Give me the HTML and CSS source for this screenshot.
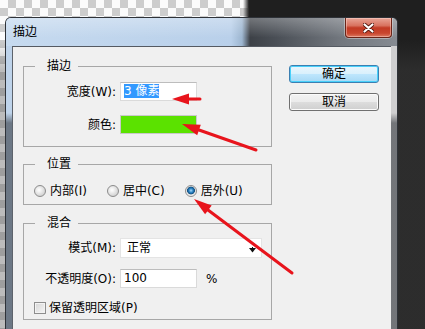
FILE: index.html
```html
<!DOCTYPE html>
<html lang="zh-CN">
<head>
<meta charset="utf-8">
<title>描边</title>
<link rel="stylesheet" href="styles.css">
</head>
<body>
<div class="desk">
  <div class="window">
    <div class="titlebar">
      <span class="title">描边</span>
      <button class="close" aria-label="关闭">
        <svg width="11" height="10" viewBox="0 0 11 10">
          <path d="M1.5 1.5 L9.5 8.5 M9.5 1.5 L1.5 8.5" stroke="#5a1a10" stroke-width="4" stroke-linecap="round"/>
          <path d="M1.5 1.5 L9.5 8.5 M9.5 1.5 L1.5 8.5" stroke="#ffffff" stroke-width="2.2" stroke-linecap="round"/>
        </svg>
      </button>
    </div>
    <div class="client">
      <div class="groups">
        <fieldset class="group g-stroke">
          <legend>描边</legend>
          <div class="form">
            <span class="lbl">宽度(W):</span>
            <div class="field"><span class="hilite">3 像素</span></div>
            <span class="lbl">颜色:</span>
            <div class="swatch"></div>
          </div>
        </fieldset>
        <fieldset class="group g-pos">
          <legend>位置</legend>
          <div class="radios">
            <label class="opt"><span class="radio"></span>内部(I)</label>
            <label class="opt"><span class="radio"></span>居中(C)</label>
            <label class="opt"><span class="radio on"></span>居外(U)</label>
          </div>
        </fieldset>
        <fieldset class="group g-blend">
          <legend>混合</legend>
          <div class="rows">
            <div class="row">
              <span class="lbl">模式(M):</span>
              <div class="select">正常
                <svg class="caret" width="7" height="6" viewBox="0 0 7 6"><path d="M0 1 H7 L3.5 5.5 Z" fill="#111"/><path d="M3.5 0 V3" stroke="#111" stroke-width="1"/></svg>
              </div>
            </div>
            <div class="row">
              <span class="lbl">不透明度(O):</span>
              <div class="field">100</div>
              <span class="pct">%</span>
            </div>
            <label class="check"><span class="box"></span>保留透明区域(P)</label>
          </div>
        </fieldset>
      </div>
      <div class="buttons">
        <button class="btn default">确定</button>
        <button class="btn">取消</button>
      </div>
    </div>
  </div>
  <svg class="arrows" width="425" height="329" viewBox="0 0 425 329">
    <g fill="#e8141c" stroke="#e8141c" stroke-width="3" stroke-linecap="round">
      <line x1="188" y1="99" x2="200" y2="99"/>
      <polygon stroke="none" points="172,99 189,93.5 189,104.5"/>
      <line x1="199" y1="130" x2="256" y2="150"/>
      <polygon stroke="none" points="182,124 200.8,124.8 197.2,135.2"/>
      <line x1="208" y1="210" x2="292" y2="273"/>
      <polygon stroke="none" points="194,199 211.7,205.5 205.1,214.2"/>
    </g>
  </svg>
</div>
</body>
</html>
```

FILE: styles.css
```css
* { box-sizing: border-box; }

body { margin: 0; }

.desk {
  position: relative;
  width: 425px;
  height: 329px;
  overflow: hidden;
  font-family: "DejaVu Sans", "Noto Sans CJK SC", sans-serif;
  font-size: 12px;
  color: #000;
  background:
    linear-gradient(to bottom, rgba(0,0,0,0) 40px, rgba(70,70,70,.35) 70px),
    linear-gradient(to right, rgba(30,30,30,0) 0 243px, #1f1f1f 249px),
    conic-gradient(#cdcdcd 25%, #fbfbfb 0 50%, #cdcdcd 0 75%, #fbfbfb 0) 0 0 / 16px 16px;
}

.window {
  margin: 17px 0 0 5px;
  width: 393px;
  height: 312px;
  border: 1px solid #2e3238;
  border-bottom: 0;
  border-radius: 6px 6px 0 0;
  overflow: hidden;
  background:
    linear-gradient(to bottom, rgba(0,0,0,0) 95px, rgba(40,44,50,.55) 105px),
    linear-gradient(to right, #bed3ea 0 50%, #cfcfd0 50%);
  display: flex;
  flex-direction: column;
}

.titlebar {
  height: 28px;
  flex: none;
  display: flex;
  justify-content: space-between;
  align-items: flex-start;
  padding-left: 7px;
  background:
    linear-gradient(to bottom, rgba(255,255,255,.28), rgba(255,255,255,0) 70%),
    linear-gradient(to right, #c6daef 0, #b9d0ea 225px, #9db6d0 236px, #3d4147 244px, #4a4f56 270px, #72777e 335px, #868b92 100%);
}

.title {
  line-height: 16px;
  margin-top: 6px;
}

.close {
  width: 47px;
  height: 20px;
  margin-right: 5px;
  padding: 0;
  border: 1px solid #6a2418;
  border-top: 0;
  border-radius: 0 0 4px 4px;
  background: linear-gradient(to bottom, #e9a597 0, #d8725f 40%, #c23a24 52%, #c9462e 80%, #dc7a62 100%);
  box-shadow: inset 0 0 0 1px rgba(255,220,210,.45), 0 0 0 1px rgba(255,255,255,.35);
  display: flex;
  align-items: center;
  justify-content: center;
}

.client {
  flex: 1;
  margin: 0 6px 0 6px;
  background: #f0f0f0;
  border-top: 1px solid #555a62;
  border-left: 1px solid #5d636b;
  padding: 11px 0 0 10px;
  display: grid;
  grid-template-columns: 249px 90px;
  column-gap: 17px;
  align-items: start;
}

.groups {
  display: flex;
  flex-direction: column;
}

.group {
  margin: 0;
  padding: 0;
  width: 249px;
  min-width: 0;
  border: 1px solid #a7a7a7;
}

.group legend {
  margin-left: 11px;
  padding: 0 7px 0 12px;
  line-height: 16px;
}

.g-pos { margin-top: 9px; }
.g-blend { margin-top: 10px; }

.form {
  display: grid;
  grid-template-columns: 92px 77px;
  column-gap: 4px;
  row-gap: 14px;
  align-items: center;
  padding: 8px 0 12px;
}

.lbl {
  text-align: right;
  line-height: 16px;
  white-space: nowrap;
}

.field {
  height: 19px;
  width: 77px;
  background: #fff;
  border: 1px solid #dadada;
  border-top-color: #bdbdbd;
  padding: 1px 0 0 3px;
  line-height: 15px;
}

.hilite {
  display: inline-block;
  background: #3399ff;
  color: #fff;
  line-height: 14px;
}

.swatch {
  height: 19px;
  width: 77px;
  background: #5be200;
  border: 1px solid #c9c9c9;
}

.radios {
  display: flex;
  gap: 20px;
  padding: 11px 0 5px 10px;
}

.opt {
  display: flex;
  align-items: center;
  gap: 4px;
  line-height: 16px;
}

.radio {
  width: 12px;
  height: 12px;
  border-radius: 50%;
  border: 1px solid #8c8c8c;
  background: radial-gradient(circle at 40% 40%, #ffffff 0, #f2f2f2 2px, #d4d4d4 6px);
}

.radio.on {
  background: radial-gradient(circle at 50% 45%, #a8dcfb 0, #2f86c6 2px, #0f4e80 3.6px, #e2e2e2 4.2px, #fafafa 6px);
}

.rows {
  display: flex;
  flex-direction: column;
  padding: 7px 0 3px;
}

.row {
  display: flex;
  align-items: center;
  gap: 4px;
}

.row .lbl { width: 92px; }

.row + .row { margin-top: 11px; }

.select {
  position: relative;
  width: 142px;
  height: 20px;
  background: #fff;
  border: 1px solid #e4e4e4;
  padding: 1px 0 0 6px;
  line-height: 16px;
}

.caret {
  position: absolute;
  right: 5px;
  top: 8px;
}

.pct { margin-left: 5px; }

.check {
  display: flex;
  align-items: center;
  gap: 3px;
  margin-top: 12px;
  padding-left: 10px;
  line-height: 16px;
}

.box {
  width: 12px;
  height: 12px;
  border: 1px solid #8e8e8e;
  background: linear-gradient(135deg, #d6d6d6, #f6f6f6);
  box-shadow: inset 0 0 0 1px #f3f3f3;
}

.buttons {
  display: flex;
  flex-direction: column;
  gap: 10px;
  margin-top: 7px;
}

.btn {
  height: 18px;
  width: 90px;
  padding: 0;
  font: inherit;
  line-height: 14px;
  color: #000;
  border: 1px solid #707070;
  border-radius: 3px;
  background: linear-gradient(to bottom, #f3f3f3 0, #ebebeb 50%, #dddddd 51%, #cfcfcf 100%);
  box-shadow: inset 0 0 0 1px #fbfbfb;
}

.btn.default {
  border-color: #3c7fb1;
  background: linear-gradient(to bottom, #eaf6fd 0, #d9f0fc 50%, #bee6fd 51%, #a7d9f5 100%);
  box-shadow: inset 0 0 0 1px #48d0fa;
}

.arrows {
  position: absolute;
  left: 0;
  top: 0;
  pointer-events: none;
}
```
